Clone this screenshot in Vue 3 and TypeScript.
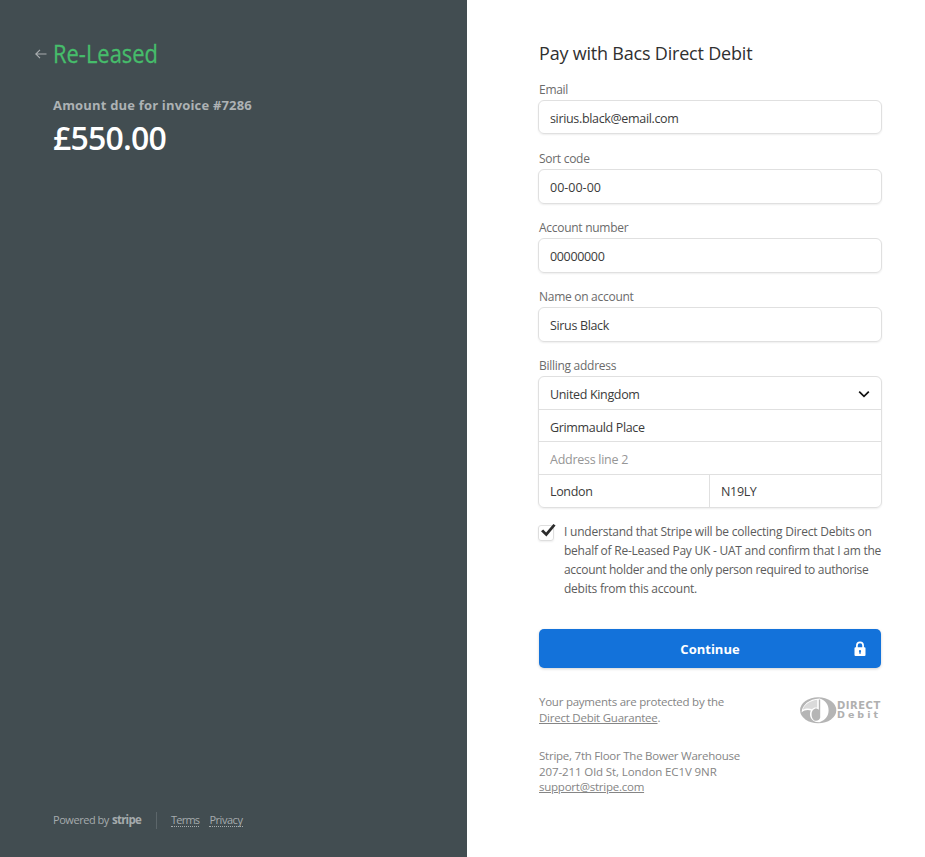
<script setup lang="ts">
interface Field {
  id: string
  label: string
  value: string
}

const fields: Field[] = [
  { id: 'email', label: 'Email', value: 'sirius.black@email.com' },
  { id: 'sort', label: 'Sort code', value: '00-00-00' },
  { id: 'account', label: 'Account number', value: '00000000' },
  { id: 'name', label: 'Name on account', value: 'Sirus Black' },
]

const consent: string[] = [
  'I understand that Stripe will be collecting Direct Debits on',
  'behalf of Re-Leased Pay UK - UAT and confirm that I am the',
  'account holder and the only person required to authorise',
  'debits from this account.',
]
</script>

<template>
  <div class="page">
    <aside class="summary">
      <header class="brand">
        <svg class="back" viewBox="0 0 12 10" aria-hidden="true">
          <path d="M11.5 5H1M5 .8L.8 5L5 9.2" />
        </svg>
        <svg class="logo" viewBox="0 0 106 28" role="img" aria-label="Re-Leased">
          <text x="-1" y="23" textLength="105" lengthAdjust="spacingAndGlyphs">Re-Leased</text>
        </svg>
      </header>
      <div class="due">Amount due for invoice #7286</div>
      <div class="amount">£550.00</div>
      <footer class="legal">
        <span class="powered">Powered by</span>
        <b class="stripe">stripe</b>
        <i class="rule"></i>
        <a class="terms">Terms</a>
        <a class="privacy">Privacy</a>
      </footer>
    </aside>

    <main class="payment">
      <h1>Pay with Bacs Direct Debit</h1>

      <div v-for="f in fields" :key="f.id" class="field" :class="f.id">
        <div class="label">{{ f.label }}</div>
        <div class="box"><span>{{ f.value }}</span></div>
      </div>

      <div class="label billing">Billing address</div>
      <div class="address">
        <div class="row country">
          <span>United Kingdom</span>
          <svg viewBox="0 0 12 8" aria-hidden="true"><path d="M1.2 1.6L6 6.4L10.8 1.6" /></svg>
        </div>
        <div class="row street"><span>Grimmauld Place</span></div>
        <div class="row line2"><span>Address line 2</span></div>
        <div class="row split">
          <div class="city"><span>London</span></div>
          <div class="postcode"><span>N19LY</span></div>
        </div>
      </div>

      <div class="consent">
        <div class="check">
          <svg viewBox="0 0 18 16" aria-hidden="true">
            <path d="M2 8.2L4.2 6.6L7.1 9.6L14.4 1L16.6 2.4L7.4 13.5Z" />
          </svg>
        </div>
        <div class="terms-text">
          <div v-for="(line, i) in consent" :key="i" :class="'l' + i">{{ line }}</div>
        </div>
      </div>

      <button class="continue" type="button">
        <span>Continue</span>
        <svg viewBox="0 0 12 16" aria-hidden="true">
          <path class="shackle" d="M2.9 7V4.4a3.1 3.1 0 0 1 6.2 0V7" />
          <path
            class="body"
            fill-rule="evenodd"
            d="M1.5 6.2h9a1 1 0 0 1 1 1V14a1 1 0 0 1-1 1h-9a1 1 0 0 1-1-1V7.2a1 1 0 0 1 1-1zM6 8.9a1.2 1.2 0 0 0-.7 2.1v1.7h1.4V11A1.2 1.2 0 0 0 6 8.9z"
          />
        </svg>
      </button>

      <div class="guarantee">
        <div class="note">
          <div class="n1">Your payments are protected by the</div>
          <div class="n2"><a>Direct Debit Guarantee</a>.</div>
        </div>
        <div class="dd">
          <svg viewBox="0 0 37 27" aria-hidden="true">
            <ellipse cx="18.2" cy="13.3" rx="18.1" ry="13" fill="#b5b5b5" />
            <path d="M19.5 1.6C25.5 3.2 28.6 7.8 28.6 13.3C28.6 18.8 25.5 23.4 19.5 25.2L16.6 25C12.6 24.2 10 21 10 17.2C10 15.8 10.2 14.8 10.8 13.6C8 12.4 4.4 13 1.6 15.4C2 8.2 9 2 19.5 1.6Z" fill="#fff" />
            <path d="M17.2 2.8C9 4 3.8 8.4 2.8 12.8C6 11 9.4 11.2 12 12.2C13.4 10.8 15.2 10.2 17.2 10.8Z" fill="#b5b5b5" opacity="0.5" />
            <path d="M20.2 2.4V20.8C19.6 22.8 18 23.8 16.2 23.8C13.4 23.8 11.6 21 11.6 17.4C11.6 13.8 13.8 11.6 16.2 11.6C17.2 11.6 18.2 12.2 18.8 13V2.6Z" fill="#b5b5b5" />
          </svg>
          <div class="dd-name">
            <div class="direct">DIRECT</div>
            <div class="debit">Debit</div>
          </div>
        </div>
      </div>

      <div class="note contact">
        <div class="n3">Stripe, 7th Floor The Bower Warehouse</div>
        <div class="n4">207-211 Old St, London EC1V 9NR</div>
        <div class="n5"><a>support@stripe.com</a></div>
      </div>
    </main>
  </div>
</template>

<style>
body {
  margin: 0;
  background: #fff;
}
</style>

<style scoped>
.page {
  display: flex;
  width: 925px;
  height: 857px;
  overflow: hidden;
  background: #fff;
  font-family: 'Open Sans', 'Noto Sans', sans-serif;
  white-space: nowrap;
}

.page * {
  box-sizing: border-box;
}

.summary {
  display: flex;
  flex: none;
  flex-direction: column;
  width: 467px;
  padding: 40px 0 28px 35px;
  background: #424d51;
}

.brand {
  display: flex;
  align-items: center;
  gap: 7px;
  height: 28px;
}

.back {
  width: 12px;
  height: 10px;
  fill: none;
  stroke: #a9aeb0;
  stroke-width: 1.1;
}

.logo {
  width: 106px;
  height: 28px;
  fill: #46bd6b;
  stroke: #46bd6b;
  stroke-width: 0.3;
  font-family: 'Open Sans', sans-serif;
  font-size: 25.8px;
  overflow: visible;
}

.due {
  margin: 27px 0 0 18px;
  line-height: 20px;
  font-size: 13px;
  font-weight: 700;
  letter-spacing: 0.18px;
  color: #adb2b4;
}

.amount {
  margin: 3px 0 0 18px;
  line-height: 40px;
  font-size: 32px;
  font-weight: 600;
  letter-spacing: -0.8px;
  color: #fff;
}

.legal {
  display: flex;
  align-items: center;
  margin: auto 0 0 18px;
  height: 18px;
  font-size: 11px;
  line-height: 14px;
  letter-spacing: -0.45px;
  color: #a5abad;
}

.stripe {
  margin-left: 3px;
  font-size: 11.5px;
  letter-spacing: -0.75px;
}

.rule {
  width: 1px;
  height: 17px;
  margin: 0 14px 0 15px;
  background: #5c666a;
}

.legal a {
  height: 14px;
  border-bottom: 1px dotted #a5abad;
}

.terms {
  letter-spacing: -0.75px;
}

.privacy {
  margin-left: 10px;
}

.payment {
  display: flex;
  flex-direction: column;
  flex: 1;
  min-width: 0;
  padding: 40px 43px 0 71px;
}

h1 {
  margin: 0 0 16px 1px;
  font-size: 18px;
  line-height: 26px;
  font-weight: 500;
  letter-spacing: -0.2px;
  color: #303030;
}

.field {
  height: 69px;
}

.label {
  height: 18px;
  padding-left: 1px;
  font-size: 12px;
  line-height: 16px;
  font-weight: 500;
  letter-spacing: -0.28px;
  color: #6b6b6b;
}

.box,
.address {
  border: 1px solid #e0e0e0;
  border-radius: 6px;
  box-shadow: 0 1px 2px rgba(0, 0, 0, 0.07);
  font-size: 12.5px;
  letter-spacing: -0.34px;
  color: #3b3b3b;
}

.box {
  display: flex;
  align-items: center;
  height: 35px;
  padding: 1px 11px 0;
}

.email .box {
  height: 34px;
  padding-top: 2px;
}

.sort .box {
  letter-spacing: 0;
}

.address {
  height: 132px;
}

.row {
  display: flex;
  align-items: center;
  justify-content: space-between;
  height: 33px;
  padding: 2px 11px 0;
  border-bottom: 1px solid #e0e0e0;
}

.row.street {
  height: 32px;
  padding-top: 3px;
}

.row.split {
  height: 32px;
  padding: 0;
  border: 0;
  align-items: stretch;
}

.country svg {
  width: 12px;
  height: 8px;
  fill: none;
  stroke: #111;
  stroke-width: 1.7;
}

.line2 {
  letter-spacing: -0.27px;
  color: #969696;
}

.split > div {
  display: flex;
  align-items: center;
  padding: 0 11px;
}

.split .city {
  width: 170px;
}

.split .postcode {
  flex: 1;
  border-left: 1px solid #e0e0e0;
}

.consent {
  display: flex;
  margin-top: 14px;
}

.check {
  width: 16px;
  height: 16px;
  margin-top: 3px;
  border: 1px solid #dedede;
  border-radius: 3px;
  box-shadow: 0 1px 2px rgba(0, 0, 0, 0.07);
}

.check svg {
  display: block;
  width: 18px;
  height: 16px;
  margin-top: -3px;
  fill: #2c2c2c;
}

.terms-text {
  margin-left: 10px;
  font-size: 12px;
  line-height: 19px;
  font-weight: 500;
  letter-spacing: -0.24px;
  color: #5c5c5c;
}

.terms-text .l0 {
  letter-spacing: -0.22px;
}

.terms-text .l2 {
  letter-spacing: -0.31px;
}

.continue {
  display: grid;
  grid-template-columns: 1fr auto 1fr;
  align-items: center;
  height: 39px;
  margin: 31px 1px 0;
  padding: 0 15px;
  border: 0;
  border-radius: 5px;
  background: #1372da;
  box-shadow: 0 1px 3px rgba(0, 0, 0, 0.18);
  color: #fff;
  font-family: inherit;
  font-size: 13px;
  font-weight: 700;
}

.continue span {
  grid-column: 2;
}

.continue svg {
  justify-self: end;
  width: 12px;
  height: 16px;
}

.shackle {
  fill: none;
  stroke: #fff;
  stroke-width: 1.7;
}

.body {
  fill: #fff;
}

.guarantee {
  display: flex;
  justify-content: space-between;
  height: 32px;
  margin: 26px 0 0;
}

.note {
  padding-left: 1px;
  font-size: 11.5px;
  line-height: 16px;
  letter-spacing: -0.24px;
  color: #858585;
}

.note a {
  text-decoration: underline;
  text-underline-offset: 1px;
}

.n4 {
  letter-spacing: -0.1px;
}

.n5 {
  margin-top: -1px;
}

.contact {
  margin-top: 22px;
}

.dd {
  display: flex;
  height: 27px;
  margin: 3px 1px 0 0;
  color: #b0b0b0;
  font-family: 'DejaVu Sans', 'Liberation Sans', sans-serif;
  font-weight: 700;
}

.dd svg {
  width: 37px;
  height: 27px;
}

.dd-name {
  width: 44px;
  padding-top: 4px;
}

.direct {
  height: 9px;
  line-height: 9px;
  font-size: 10px;
  letter-spacing: 0.5px;
}

.debit {
  height: 9px;
  line-height: 9px;
  font-size: 9.5px;
  letter-spacing: 3px;
}
</style>
